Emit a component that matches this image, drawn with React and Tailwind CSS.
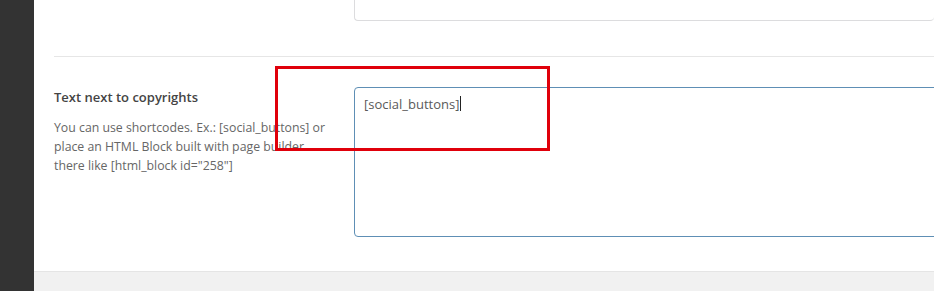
import React from 'react';

export default function App() {
  return (
    <div className="flex h-[291px] w-[934px] overflow-hidden font-['Open_Sans',sans-serif]">
      {/* admin sidebar */}
      <aside className="w-[34px] shrink-0 bg-[#333333]" />

      <main className="flex min-w-0 flex-1 flex-col bg-[#f1f1f1]">
        <div className="relative h-[272px] shrink-0 overflow-hidden border-b border-[#e5e5e5] bg-white pl-5">
          {/* previous field */}
          <div className="flex h-[57px] border-b border-[#e6e6e6]">
            <div className="w-[300px] shrink-0" />
            <div className="-mt-4 h-[37px] flex-1 rounded-b-[4px] border border-[#dcdcde] border-r-0" />
          </div>

          {/* current row */}
          <div className="flex pt-[30px]">
            <div className="w-[300px] shrink-0 pr-5">
              <h3 className="text-[13px] font-semibold leading-[20px] text-[#444]">
                Text next to copyrights
              </h3>
              <p className="mt-[11px] text-[12.3px] leading-[19px] text-[#666]">
                You can use shortcodes. Ex.: [social_buttons] or place an HTML Block built with page builder there like [html_block id="258"]
              </p>
            </div>
            <div className="flex-1">
              <div className="-mr-1 h-[150px] rounded-[4px] border border-[#5e8fb5] px-[9px] py-[6px] text-[13px] leading-[20px] text-[#5a5a5a]">
                [social_buttons]<span className="ml-[1px] inline-block h-[15px] w-px translate-y-[2px] bg-[#222]" />
              </div>
            </div>
          </div>

          {/* annotation */}
          <div className="absolute left-[241px] top-[66px] h-[85px] w-[275px] border-[3px] border-[#e0000b]" />
        </div>
      </main>
    </div>
  );
}
